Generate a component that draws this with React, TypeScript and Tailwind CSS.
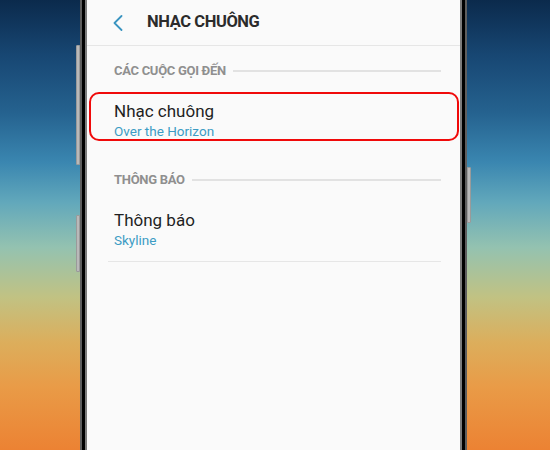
function SectionHeader({ label }: { label: string }) {
  return (
    <div className="flex items-center pl-[27px] pr-[19px]">
      <span className="text-[13px] leading-[16px] font-bold text-[#8f8f8f] tracking-[-0.3px]">{label}</span>
      <div className="flex-1 h-[2px] bg-[#e2e2e2] ml-[7px]" />
    </div>
  );
}

function SettingRow({ title, value }: { title: string; value: string }) {
  return (
    <div className="flex flex-col">
      <span className="text-[17px] leading-[22px] text-[#1f1f1f]">{title}</span>
      <span className="text-[13.5px] leading-[18px] text-[#3c9cc4]">{value}</span>
    </div>
  );
}

export default function App() {
  return (
    <div
      className="w-[550px] h-[450px] overflow-hidden flex justify-center bg-[linear-gradient(to_bottom,#0b2a4c_0%,#174672_12%,#25628f_25%,#3a86b0_36%,#62a8bb_45%,#94c2b0_55%,#c1c283_66%,#dcae5c_76%,#e99b47_86%,#ec8233_100%)]"
      style={{ fontFamily: 'Roboto, "Noto Sans", sans-serif' }}
    >
      <div className="relative ml-[-3px] h-full">
        {/* side keys */}
        <div className="absolute left-[-4px] top-[45px] w-[4px] h-[120px] bg-[#b9b9b9] border border-[#9a9a9a] rounded-l-[1px]" />
        <div className="absolute left-[-4px] top-[215px] w-[4px] h-[57px] bg-[#b9b9b9] border border-[#9a9a9a] rounded-l-[1px]" />
        <div className="absolute right-[-4px] top-[167px] w-[4px] h-[56px] bg-[#b9b9b9] border border-[#9a9a9a] rounded-r-[1px]" />

        <div className="h-full border-x-2 border-[#5e5e5e]">
          <div className="h-full border-x-[3px] border-black">
            <div className="h-full border-x-2 border-[#7c7c7c]">
              <div className="w-[373px] h-full bg-[#fafafa] flex flex-col">
                <div className="h-[46px] flex items-center border-b border-[#e6e6e6] pl-[26px]">
                  <svg width="10" height="16" viewBox="0 0 10 16" fill="none">
                    <path d="M8.5 1 L1.5 8 L8.5 15" stroke="#3a94c0" strokeWidth="1.8" strokeLinecap="round" strokeLinejoin="round" />
                  </svg>
                  <span className="ml-[24px] text-[16.5px] font-bold text-[#2b2b2b] tracking-[-0.4px]">NHẠC CHUÔNG</span>
                </div>

                <div className="mt-[17px]">
                  <SectionHeader label="CÁC CUỘC GỌI ĐẾN" />
                </div>

                <div className="mt-[13px] ml-[2px] mr-[1px] h-[49px] border-2 border-[#f00a0a] rounded-[10px] pl-[23px] pt-[6px]">
                  <SettingRow title="Nhạc chuông" value="Over the Horizon" />
                </div>

                <div className="mt-[31px]">
                  <SectionHeader label="THÔNG BÁO" />
                </div>

                <div className="mt-[21px] pl-[27px]">
                  <SettingRow title="Thông báo" value="Skyline" />
                </div>

                <div className="mt-[12px] ml-[21px] mr-[19px] h-px bg-[#e6e6e6]" />
              </div>
            </div>
          </div>
        </div>
      </div>
    </div>
  );
}
